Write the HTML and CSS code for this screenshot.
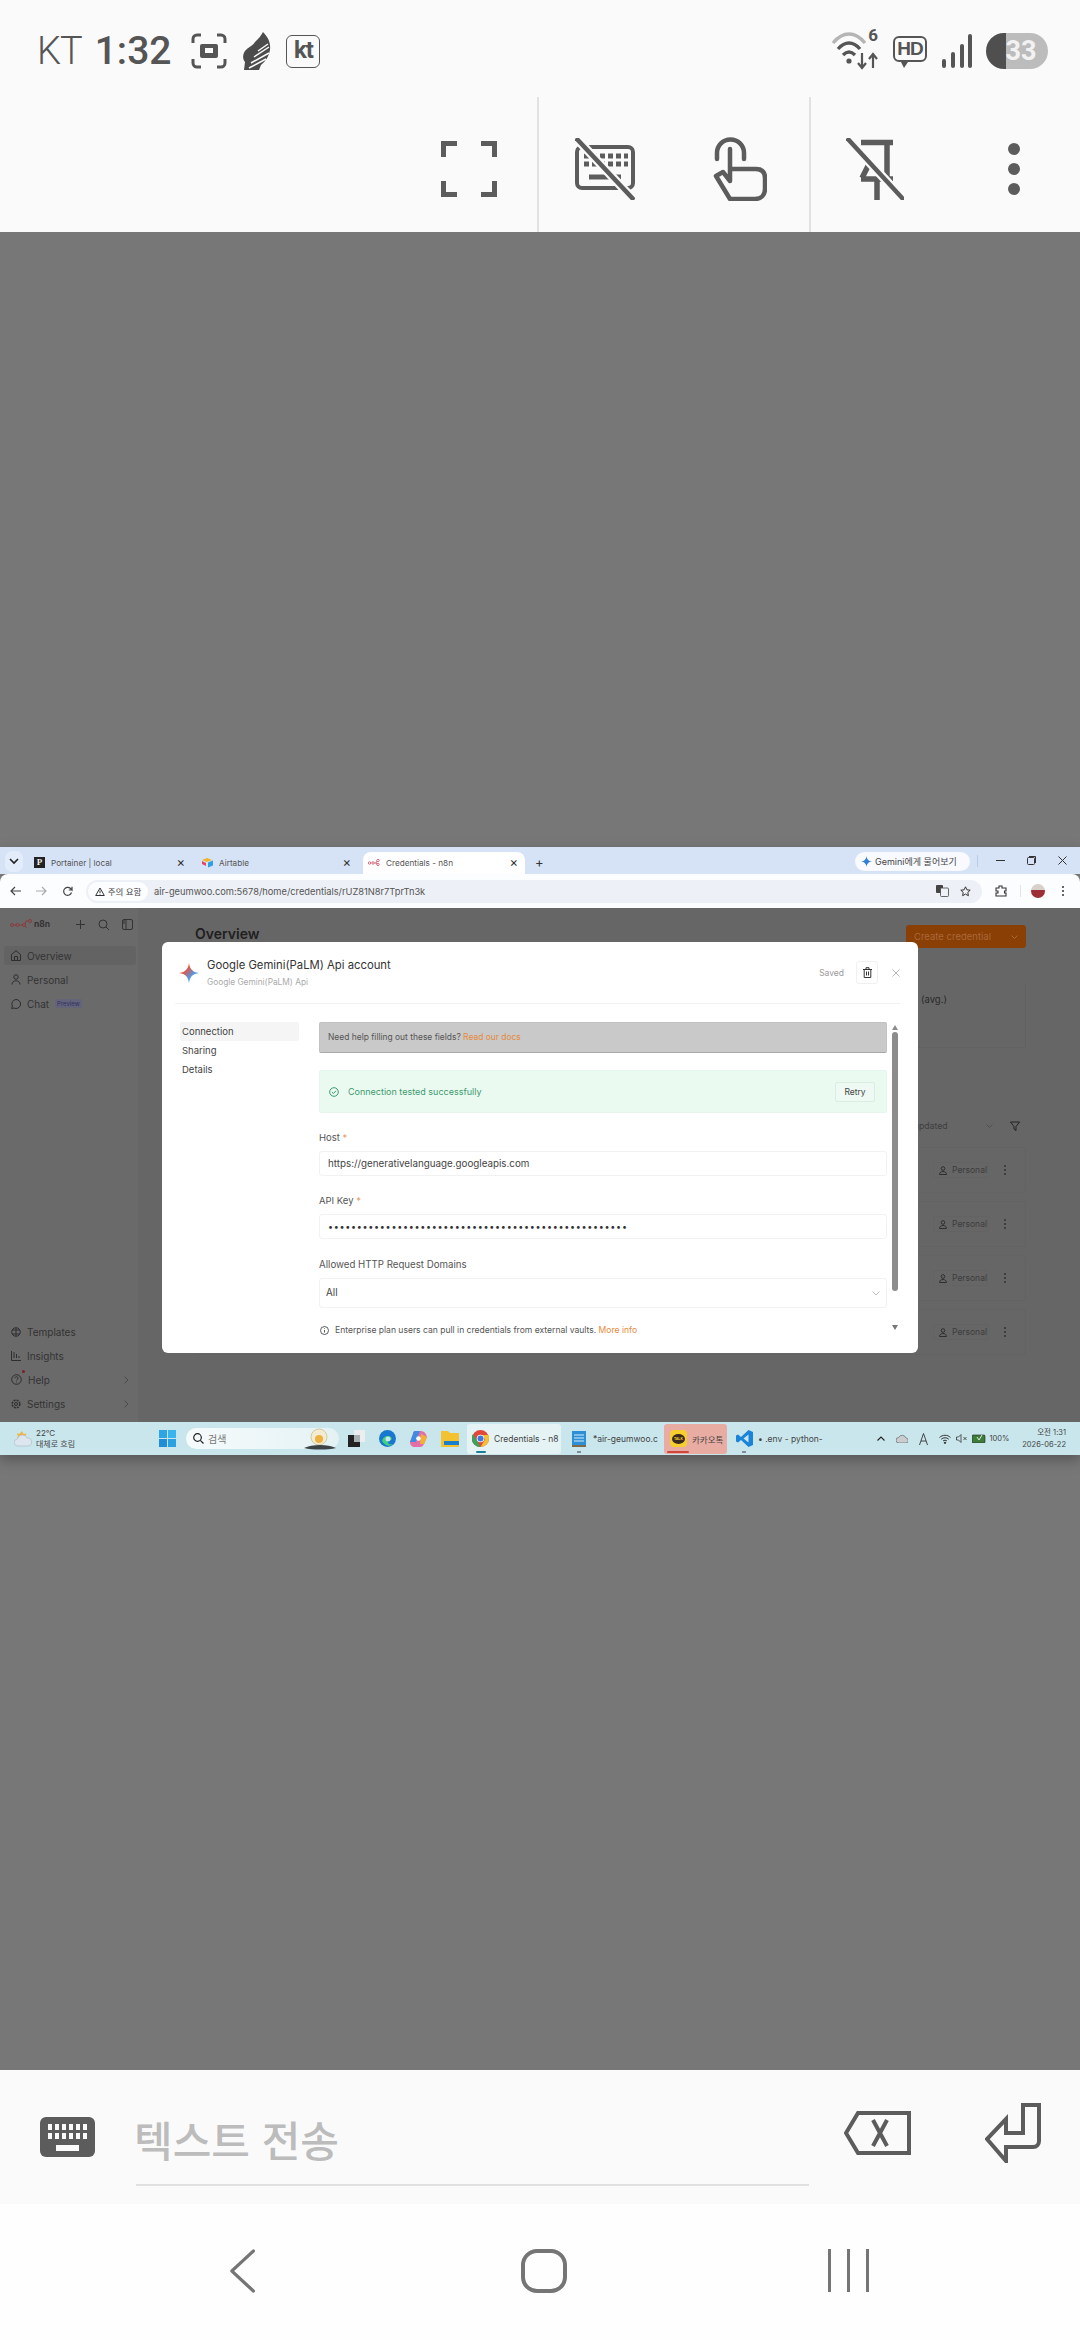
FILE: index.html
```html
<!DOCTYPE html>
<html lang="ko">
<head>
<meta charset="UTF-8" />
<title>Remote session</title>
<link rel="stylesheet" href="styles.css">
</head>
<body>

<svg class="defs" width="0" height="0">
  <defs>
    <linearGradient id="spark" x1="0" y1="0" x2="1" y2="1">
      <stop offset="0" stop-color="#e8b23a"/>
      <stop offset="0.35" stop-color="#e0574a"/>
      <stop offset="0.65" stop-color="#4e9be8"/>
      <stop offset="1" stop-color="#3fae6a"/>
    </linearGradient>
  </defs>
</svg>

<!-- 폰 상단 -->
<div class="top-panel">
  <div class="status-bar">
    <div class="status-left">
      <span class="carrier">KT</span>
      <span class="clock">1:32</span>
      <svg class="st-shot" width="36" height="36" viewBox="0 0 36 36" fill="none" stroke="#555" stroke-width="3">
        <path d="M2 10V6a4 4 0 0 1 4-4h4M26 2h4a4 4 0 0 1 4 4v4M34 26v4a4 4 0 0 1-4 4h-4M10 34H6a4 4 0 0 1-4-4v-4"/>
        <rect x="9" y="11" width="18" height="14" rx="2" fill="#555" stroke="none"/>
        <rect x="14" y="15" width="8" height="5" fill="#fafafa" stroke="none"/>
      </svg>
      <svg class="st-feather" width="30" height="38" viewBox="0 0 30 38">
        <path d="M22 0c5 5 8 11 7 18-1 6-4 11-9 15l-2 5H3l1-8c-3-4-2-8 0-11 3-4 8-5 10-9 3-3 6-6 8-10z" fill="#4c4c4c"/>
        <path d="M8 36l17-9M10 31l18-10M13 25l15-10M17 19l10-7" stroke="#fafafa" stroke-width="1.500"/>
      </svg>
      <span class="st-kt">kt</span>
    </div>
    <div class="status-right">
      <span class="st-wifi">
        <svg width="50" height="40" viewBox="0 0 50 40" fill="none" stroke-width="3.4">
          <path d="M2 12C12 0 24 0 34 12" stroke="#b5b5b5"/>
          <path d="M7 18c7-8 15-8 22 0M12 24c4-4 8-4 12 0" stroke="#555"/>
          <circle cx="18" cy="30" r="2.6" fill="#555" stroke="none"/>
          <path d="M31 22v14M27 32l4 5 4-5M42 37V23M38 28l4-5 4 5" stroke="#555" stroke-width="2.2"/>
        </svg>
        <span class="st-six">6</span>
      </span>
      <span class="st-hd">HD</span>
      <svg class="st-signal" width="30" height="34" viewBox="0 0 30 34" fill="#555">
        <rect x="0" y="25" width="4" height="9" rx="2"/><rect x="9" y="18" width="4" height="16" rx="2"/>
        <rect x="18" y="10" width="4" height="24" rx="2"/><rect x="26" y="0" width="4" height="34" rx="2"/>
      </svg>
      <span class="st-battery"><span class="st-battery-num">33</span></span>
    </div>
  </div>

  <div class="tool-bar">
    <div class="tool-group tool-a">
      <svg width="56" height="56" viewBox="0 0 56 56" fill="none" stroke="#5c5c5c" stroke-width="5">
        <path d="M2.500 16V2.500H16M40 2.500h13.500V16M53.500 40v13.500H40M16 53.500H2.500V40"/>
      </svg>
    </div>
    <div class="tool-group tool-b">
      <svg width="60" height="62" viewBox="0 0 60 62" fill="none" stroke="#5c5c5c">
        <rect x="2" y="9" width="56" height="41" rx="5" stroke-width="4"/>
        <path d="M9 18h5M17 18h5M25 18h5M33 18h5M41 18h5M49 18h4M9 26h5M17 26h5M25 26h5M33 26h5M41 26h5M49 26h4M14 39h32" stroke-width="5"/>
        <path d="M1 0l58 62" stroke="#fafafa" stroke-width="9"/>
        <path d="M1 0l58 62" stroke-width="4.500"/>
      </svg>
      <svg width="54" height="64" viewBox="0 0 54 64" fill="none" stroke="#5c5c5c" stroke-width="4.500" stroke-linejoin="round" stroke-linecap="round">
        <path d="M4 22V16a13.500 13.500 0 0 1 27 0v6"/>
        <path d="M17 12v32l-7-9-7 4 14 23h25c6 0 10-4 10-10V41c0-6-3-9-9-9H17"/>
      </svg>
    </div>
    <div class="tool-group tool-c">
      <svg width="58" height="62" viewBox="0 0 58 62" fill="none" stroke="#5c5c5c">
        <path d="M15 4.500h32M41 4v36M15 41h32M31 42v20M23 26l-7 14" stroke-width="5.500"/>
        <path d="M1 0l57 62" stroke="#fafafa" stroke-width="9"/>
        <path d="M1 0l57 62" stroke-width="4.500"/>
      </svg>
      <span class="dots-v"><i></i><i></i><i></i></span>
    </div>
  </div>
</div>

<!-- 원격 화면 -->
<div class="remote">
  <div class="tab-strip">
    <span class="tab-menu">
      <svg width="10" height="7" viewBox="0 0 10 7" fill="none" stroke="#222" stroke-width="1.600"><path d="M1 1l4 4 4-4"/></svg>
    </span>
    <div class="tab tab-first">
      <span class="fav-portainer">P</span>
      <span class="tab-title">Portainer | local</span>
      <span class="tab-x">×</span>
    </div>
    <div class="tab tab-second">
      <svg width="11" height="10" viewBox="0 0 11 10">
        <path d="M5 0l5 2-5 2-5-2z" fill="#f0b429"/><path d="M6 4.500l5-2v5l-5 2z" fill="#2d9fe8"/><path d="M0 3l4 2v3L0 6z" fill="#e8455c"/>
      </svg>
      <span class="tab-title">Airtable</span>
      <span class="tab-x">×</span>
    </div>
    <div class="tab tab-active">
      <svg width="12" height="7" viewBox="0 0 12 7" fill="none" stroke="#d76a7c" stroke-width="1">
        <circle cx="1.500" cy="4" r="1.200"/><circle cx="5" cy="4" r="1.200"/><circle cx="10" cy="1.500" r="1.200"/><circle cx="10" cy="5.500" r="1.200"/>
        <path d="M6.200 4H8l1-2M8 4l1 1.500"/>
      </svg>
      <span class="tab-title">Credentials - n8n</span>
      <span class="tab-x">×</span>
    </div>
    <span class="tab-plus">+</span>
    <span class="gemini-pill">
      <svg width="11" height="11" viewBox="0 0 24 24"><path d="M12 0c1 7 4 11 12 12-8 1-11 5-12 12-1-7-4-11-12-12 8-1 11-5 12-12z" fill="#2f7fd6"/></svg>
      Gemini에게 물어보기
    </span>
    <span class="strip-sep"></span>
    <div class="win-controls">
      <svg width="9" height="9" viewBox="0 0 9 9" stroke="#333" fill="none"><path d="M0 4.500h9"/></svg>
      <svg width="9" height="9" viewBox="0 0 9 9" stroke="#333" fill="none"><rect x="0.500" y="1.500" width="7" height="7" rx="1"/><path d="M2 .500h6.500V7"/></svg>
      <svg width="9" height="9" viewBox="0 0 9 9" stroke="#333" fill="none"><path d="M.500.500l8 8M8.500.500l-8 8"/></svg>
    </div>
  </div>

  <div class="url-bar">
    <svg width="11" height="10" viewBox="0 0 11 10" fill="none" stroke="#444" stroke-width="1.200"><path d="M11 5H1M5 1L1 5l4 4"/></svg>
    <svg class="nav-off" width="11" height="10" viewBox="0 0 11 10" fill="none" stroke="#aaa" stroke-width="1.200"><path d="M0 5h10M6 1l4 4-4 4"/></svg>
    <svg width="11" height="11" viewBox="0 0 11 11" fill="none" stroke="#444" stroke-width="1.200"><path d="M9.500 6.500a4 4 0 1 1-1-4L10 4V.800M10 4H6.800"/></svg>
    <div class="omnibox">
      <span class="warn-chip">
        <svg width="10" height="9" viewBox="0 0 10 9" fill="none" stroke="#333"><path d="M5 1l4.300 7.500H.700zM5 3.500v2.500M5 6.800v.7"/></svg>
        주의 요함
      </span>
      <span class="url-text">air-geumwoo.com:5678/home/credentials/rUZ81N8r7TprTn3k</span>
      <span class="omni-icons">
        <svg width="13" height="12" viewBox="0 0 13 12"><rect x="0" y="0" width="7" height="8" rx="1" fill="#444"/><rect x="4.500" y="3" width="8" height="8.500" rx="1" fill="#eef1f7" stroke="#444" stroke-width=".8"/></svg>
        <svg width="11" height="11" viewBox="0 0 11 11" fill="none" stroke="#333" stroke-width="1"><path d="M5.500.800l1.400 3 3.300.400-2.400 2.200.600 3.300-2.900-1.600-2.900 1.600.600-3.300L.800 4.200l3.300-.400z"/></svg>
      </span>
    </div>
    <svg class="ext-icon" width="12" height="12" viewBox="0 0 12 12" fill="none" stroke="#333" stroke-width="1.100"><path d="M1 3h3V1h3v2h4v3H9.500v2H11v3H1V8h2V6H1z"/></svg>
    <span class="url-sep"></span>
    <span class="avatar"></span>
    <span class="dots-small"><i></i><i></i><i></i></span>
  </div>

  <div class="desktop">
    <aside class="side">
      <div class="side-head">
        <svg width="22" height="10" viewBox="0 0 22 10" fill="none" stroke="#8c3b3f" stroke-width="1">
          <circle cx="2" cy="6" r="1.500"/><circle cx="7.500" cy="6" r="1.500"/><circle cx="14" cy="6" r="1.500"/><circle cx="20" cy="2" r="1.500"/>
          <path d="M3.500 6h2.500M9 6h3.500M15 5l1-3h2.500M15 7l2 2"/>
        </svg>
        <span class="side-brand">n8n</span>
        <span class="side-tools">
          <svg width="9" height="9" viewBox="0 0 9 9" stroke="#333"><path d="M4.500 0v9M0 4.500h9"/></svg>
          <svg width="11" height="11" viewBox="0 0 11 11" fill="none" stroke="#333"><circle cx="5" cy="5" r="4"/><path d="M8 8l3 3"/></svg>
          <svg width="11" height="11" viewBox="0 0 11 11" fill="none" stroke="#333"><rect x=".5" y=".5" width="10" height="10" rx="1.500"/><path d="M4 .5v10"/><path d="M1 2h2M1 4h2"/></svg>
        </span>
      </div>
      <nav class="side-list">
        <div class="side-row is-on">
          <svg width="10" height="11" viewBox="0 0 10 11" fill="none" stroke="#2e2e2e"><path d="M.5 4.500L5 .7l4.500 3.800v6h-9zM3.500 10.500V6.500h3v4"/></svg>
          Overview
        </div>
        <div class="side-row">
          <svg width="10" height="11" viewBox="0 0 10 11" fill="none" stroke="#2e2e2e"><circle cx="5" cy="3" r="2.200"/><path d="M1 10.500c0-5 8-5 8 0"/></svg>
          Personal
        </div>
        <div class="side-row">
          <svg width="10" height="10" viewBox="0 0 10 10" fill="none" stroke="#2e2e2e"><path d="M5 .5a4.500 4.500 0 1 1-2 8.500L.7 9.500 1.300 7A4.500 4.500 0 0 1 5 .5z"/></svg>
          Chat <span class="preview">Preview</span>
        </div>
      </nav>
      <nav class="side-list side-bottom">
        <div class="side-row">
          <svg width="10" height="10" viewBox="0 0 10 10" fill="none" stroke="#2e2e2e"><circle cx="5" cy="5" r="4.300"/><path d="M1 3h8M1 7h8M5 1v8"/></svg>
          Templates
        </div>
        <div class="side-row">
          <svg width="10" height="10" viewBox="0 0 10 10" fill="none" stroke="#2e2e2e"><path d="M.5 0v9.500H10M3 7V1M5.500 7V3M8 7V5"/></svg>
          Insights
        </div>
        <div class="side-row has-more">
          <svg width="11" height="11" viewBox="0 0 11 11" fill="none" stroke="#2e2e2e"><circle cx="5.500" cy="5.500" r="4.800"/><path d="M4 4.200c0-2 3-2 3 0 0 1.200-1.500 1.200-1.500 2.300M5.500 7.800v.7"/></svg>
          Help
          <span class="red-dot"></span>
          <svg class="more" width="5" height="8" viewBox="0 0 5 8" fill="none" stroke="#4c4c4c"><path d="M.5.500L4 4 .5 7.500"/></svg>
        </div>
        <div class="side-row has-more">
          <svg width="10" height="10" viewBox="0 0 10 10" fill="none" stroke="#2e2e2e"><circle cx="5" cy="5" r="1.500"/><circle cx="5" cy="5" r="3.800" stroke-width="1.600" stroke-dasharray="2 1"/></svg>
          Settings
          <svg class="more" width="5" height="8" viewBox="0 0 5 8" fill="none" stroke="#4c4c4c"><path d="M.5.500L4 4 .5 7.500"/></svg>
        </div>
      </nav>
    </aside>

    <main class="back-page">
      <div class="back-head">
        <h1 class="back-title">Overview</h1>
        <span class="create-btn">Create credential
          <svg width="7" height="4" viewBox="0 0 7 4" fill="none" stroke="#a9683a"><path d="M.5.500L3.500 3.500 6.500.500"/></svg>
        </span>
      </div>
      <div class="stat-card">(avg.)</div>
      <div class="sort-row">
        <span class="sort-select">Sort by last updated
          <svg width="7" height="4" viewBox="0 0 7 4" fill="none" stroke="#4e4e4e"><path d="M.5.500L3.500 3.500 6.500.500"/></svg>
        </span>
        <svg class="filter" width="10" height="10" viewBox="0 0 10 10" fill="none" stroke="#222"><path d="M.5 1h9L6 5.500v4L4 8V5.500z"/></svg>
      </div>
      <div class="cred-rows">
        <div class="cred-row"><span class="badge"><svg width="8" height="9" viewBox="0 0 8 9" fill="none" stroke="#2e2e2e"><circle cx="4" cy="2.500" r="1.800"/><path d="M.5 8.500c0-4 7-4 7 0z"/></svg>Personal</span><span class="dots-small dark"><i></i><i></i><i></i></span></div>
        <div class="cred-row"><span class="badge"><svg width="8" height="9" viewBox="0 0 8 9" fill="none" stroke="#2e2e2e"><circle cx="4" cy="2.500" r="1.800"/><path d="M.5 8.500c0-4 7-4 7 0z"/></svg>Personal</span><span class="dots-small dark"><i></i><i></i><i></i></span></div>
        <div class="cred-row"><span class="badge"><svg width="8" height="9" viewBox="0 0 8 9" fill="none" stroke="#2e2e2e"><circle cx="4" cy="2.500" r="1.800"/><path d="M.5 8.500c0-4 7-4 7 0z"/></svg>Personal</span><span class="dots-small dark"><i></i><i></i><i></i></span></div>
        <div class="cred-row"><span class="badge"><svg width="8" height="9" viewBox="0 0 8 9" fill="none" stroke="#2e2e2e"><circle cx="4" cy="2.500" r="1.800"/><path d="M.5 8.500c0-4 7-4 7 0z"/></svg>Personal</span><span class="dots-small dark"><i></i><i></i><i></i></span></div>
      </div>
    </main>

    <!-- 모달 -->
    <section class="modal">
      <header class="modal-head">
        <svg class="spark" width="20" height="20" viewBox="0 0 24 24"><path d="M12 0c1 7 4 11 12 12-8 1-11 5-12 12-1-7-4-11-12-12 8-1 11-5 12-12z" fill="url(#spark)"/></svg>
        <div class="modal-titles">
          <div class="modal-title">Google Gemini(PaLM) Api account</div>
          <div class="modal-sub">Google Gemini(PaLM) Api</div>
        </div>
        <span class="saved">Saved</span>
        <span class="trash">
          <svg width="9" height="11" viewBox="0 0 9 11" fill="none" stroke="#333" stroke-width="1"><path d="M0 2.500h9M3 2.500V.7h3v1.800M1.200 2.500v8h6.600v-8M3.500 4.500v4M5.500 4.500v4"/></svg>
        </span>
        <svg class="modal-x" width="8" height="8" viewBox="0 0 8 8" stroke="#bbb"><path d="M.5.500l7 7M7.500.500l-7 7"/></svg>
      </header>
      <div class="modal-body">
        <nav class="modal-nav">
          <div class="modal-tab is-on">Connection</div>
          <div class="modal-tab">Sharing</div>
          <div class="modal-tab">Details</div>
        </nav>
        <div class="modal-form">
          <div class="notice">Need help filling out these fields? <span class="notice-link">Read our docs</span></div>
          <div class="success">
            <svg width="10" height="10" viewBox="0 0 10 10" fill="none" stroke="#3b9a6d"><circle cx="5" cy="5" r="4.300"/><path d="M3 5.200l1.500 1.300L7 3.800"/></svg>
            <span class="success-text">Connection tested successfully</span>
            <span class="retry">Retry</span>
          </div>
          <label class="field-label">Host <span class="req">*</span></label>
          <div class="field field-host">https://generativelanguage.googleapis.com</div>
          <label class="field-label">API Key <span class="req">*</span></label>
          <div class="field field-key">••••••••••••••••••••••••••••••••••••••••••••••••••••</div>
          <label class="field-label label-allowed">Allowed HTTP Request Domains</label>
          <div class="field field-select">All
            <svg width="8" height="5" viewBox="0 0 8 5" fill="none" stroke="#bbb"><path d="M.5.500L4 4 7.500.500"/></svg>
          </div>
          <div class="info">
            <svg width="9" height="9" viewBox="0 0 9 9" fill="none" stroke="#333" stroke-width=".8"><circle cx="4.500" cy="4.500" r="4"/><path d="M4.500 4v2.500M4.500 2.300v.7"/></svg>
            <span>Enterprise plan users can pull in credentials from external vaults. <span class="more-info">More info</span></span>
          </div>
        </div>
        <div class="modal-scroll">
          <i class="arrow-up"></i>
          <span class="thumb"></span>
          <i class="arrow-down"></i>
        </div>
      </div>
    </section>
  </div>

  <div class="taskbar">
    <div class="weather">
      <svg width="18" height="18" viewBox="0 0 18 18">
        <path d="M8 1l1.500 3 3-.5-1 3 2 2H3l1-3-1.500-2 3 .2z" fill="#eeb64a"/>
        <path d="M4 16a3.500 3.500 0 0 1-.5-7A5 5 0 0 1 13 8a4 4 0 0 1 1 8z" fill="#dde6ee" stroke="#a9b8c6" stroke-width=".6"/>
      </svg>
      <div class="weather-text"><div>22°C</div><div>대체로 흐림</div></div>
    </div>
    <svg class="win-logo" width="17" height="17" viewBox="0 0 17 17">
      <rect width="8" height="8" fill="#2fa6e4"/><rect x="9" width="8" height="8" fill="#39b4ee"/><rect y="9" width="8" height="8" fill="#1f8ed6"/><rect x="9" y="9" width="8" height="8" fill="#2a9fe2"/>
    </svg>
    <div class="task-search">
      <svg width="11" height="11" viewBox="0 0 11 11" fill="none" stroke="#222" stroke-width="1.200"><circle cx="4.500" cy="4.500" r="3.800"/><path d="M7.300 7.300L10.500 10.500"/></svg>
      <span class="task-search-text">검색</span>
      <svg class="sunrise" width="32" height="22" viewBox="0 0 32 22">
        <circle cx="15" cy="9" r="8" fill="#f3ecd0" stroke="#d3c9a2"/><circle cx="15" cy="11" r="4" fill="#eeb040"/>
        <path d="M0 20c8-4 24-4 32 0-8 2-24 2-32 0z" fill="#3d4246"/>
      </svg>
    </div>
    <div class="task-icons">
      <svg width="17" height="17" viewBox="0 0 17 17"><rect x="6" width="11" height="12" fill="#ecedee"/><rect y="5" width="12" height="12" fill="#222"/><rect x="6" y="5" width="6" height="7" fill="#a9b0b4"/></svg>
      <svg width="17" height="17" viewBox="0 0 17 17"><circle cx="8.500" cy="8.500" r="8.500" fill="#1877cf"/><path d="M3 11c1-5 6-6 9-4 1 1 1 3-1 3-3 0-3 2-1 4 1 .7 3 .5 4 0-3 3-8 2-11-3z" fill="#43d27e"/><circle cx="9" cy="9" r="2.500" fill="#c9e6ec"/></svg>
      <svg width="17" height="17" viewBox="0 0 17 17"><path d="M5 1h6c3 0 5 2 6 6l-3 7c-1 2-2 3-4 3H5c-3 0-5-2-5-5l3-8c0-2 1-3 2-3z" fill="#e46ea6"/><path d="M5 1h5L6 12H0L3 4c0-2 1-3 2-3z" fill="#3f8be0"/><path d="M11 4l6 3-3 7-4 0z" fill="#f2b134"/><circle cx="8.500" cy="8.500" r="2.300" fill="#fff"/></svg>
      <svg width="18" height="17" viewBox="0 0 18 17"><path d="M0 1h7l2 2h9v14H0z" fill="#f2c230"/><rect x="3" y="11" width="15" height="4" fill="#1d7fc9"/></svg>
    </div>
    <div class="task-app app-chrome">
      <svg width="17" height="17" viewBox="0 0 17 17"><circle cx="8.500" cy="8.500" r="8.500" fill="#e0483c"/><path d="M8.500 17A8.500 8.500 0 0 1 1 4l4.500 7.500 3 5.500z" fill="#3fa05a"/><path d="M17 8.500A8.500 8.500 0 0 1 8.500 17L13 9.500 11 5h5.500c.3 1 .5 2.300.5 3.500z" fill="#f3c230"/><circle cx="8.500" cy="8.500" r="3.800" fill="#fff"/><circle cx="8.500" cy="8.500" r="3" fill="#3b78e0"/></svg>
      <span class="task-label">Credentials - n8</span>
      <span class="task-line line-teal"></span>
    </div>
    <div class="task-app app-note">
      <svg width="14" height="18" viewBox="0 0 14 18"><rect y="1" width="14" height="14" fill="#2f8fd6"/><path d="M2 5h10M2 8h10M2 11h10" stroke="#d9edf8"/><rect y="15" width="14" height="2" fill="#7d6a4a"/></svg>
      <span class="task-label">*air-geumwoo.c</span>
      <span class="task-dot"></span>
    </div>
    <div class="task-app app-kakao">
      <span class="kakao-icon"><span class="kakao-bubble">TALK</span></span>
      <span class="task-label">카카오톡</span>
      <span class="task-line line-red"></span>
    </div>
    <div class="task-app app-code">
      <svg width="17" height="17" viewBox="0 0 17 17"><path d="M12.500 0L17 2v13l-4.500 2L5 10 2 12.500 0 11.500v-6L2 4.500 5 7z" fill="#1a84d8"/><path d="M12.500 4.500L7.500 8.500l5 4z" fill="#c9e6ec"/></svg>
      <span class="task-label">• .env - python-</span>
      <span class="task-dot"></span>
    </div>
    <div class="tray">
      <svg width="8" height="5" viewBox="0 0 8 5" fill="none" stroke="#222" stroke-width="1.100"><path d="M.5 4.500L4 1l3.500 3.500"/></svg>
      <svg width="12" height="9" viewBox="0 0 12 9"><path d="M3 9a2.800 2.800 0 0 1-.3-5.600A4 4 0 0 1 10 4a2.500 2.500 0 0 1-.5 5z" fill="#c9cdd0" stroke="#555" stroke-width=".6"/></svg>
      <svg width="9" height="12" viewBox="0 0 9 12" fill="none" stroke="#333" stroke-width=".9"><path d="M.5 12L4.500 .5 8.500 12M2 8h5"/></svg>
      <svg width="12" height="10" viewBox="0 0 12 10" fill="none" stroke="#222" stroke-width=".9"><path d="M.5 3.500c3-3 8-3 11 0M2.200 5.300c2-2 5.600-2 7.600 0M4 7c1-1 3-1 4 0"/><circle cx="6" cy="8.800" r=".7" fill="#222"/></svg>
      <svg class="tray-mute" width="11" height="9" viewBox="0 0 11 9" fill="none" stroke="#333" stroke-width=".8"><path d="M.5 3v3h2L5 8.500V.5L2.500 3zM7.500 3l3 3M10.500 3l-3 3"/></svg>
      <span class="tray-battery">
        <svg width="14" height="9" viewBox="0 0 14 9"><rect x="0" y="1" width="13" height="8" rx="1" fill="#3e7c3c" stroke="#222" stroke-width=".6"/><path d="M5 3l2 3 3-5" stroke="#d8efd6" fill="none"/></svg>
        100%
      </span>
      <div class="tray-clock"><div>오전 1:31</div><div>2026-06-22</div></div>
    </div>
  </div>
</div>

<div class="spacer"></div>

<!-- 입력 막대 -->
<div class="input-bar">
  <svg width="55" height="40" viewBox="0 0 55 40">
    <rect width="55" height="40" rx="6" fill="#5c5c5c"/>
    <path d="M8 10h4M15 10h4M22 10h4M29 10h4M36 10h4M43 10h4M8 19h4M15 19h4M22 19h4M29 19h4M36 19h4M43 19h4" stroke="#fafafa" stroke-width="6"/>
    <rect x="16" y="28" width="23" height="6" fill="#fafafa"/>
  </svg>
  <div class="text-field">텍스트 전송</div>
  <svg class="bksp" width="67" height="44" viewBox="0 0 67 44" fill="none" stroke="#5c5c5c" stroke-width="4">
    <path d="M65 2H14L2 22l12 20h51z"/>
    <path d="M29 9l14 26M43 9L29 35" stroke-width="4"/>
  </svg>
  <svg class="enter" width="56" height="60" viewBox="0 0 56 60" fill="none" stroke="#5c5c5c" stroke-width="4">
    <path d="M54 2H38v28H21V16L2 36l19 22V44h27c4 0 6-3 6-6z"/>
  </svg>
</div>

<!-- 내비게이션 -->
<div class="nav-bar">
  <svg width="28" height="44" viewBox="0 0 28 44" fill="none" stroke="#757575" stroke-width="3.500" stroke-linecap="round" stroke-linejoin="round"><path d="M26 2L2 22l24 20" transform="matrix(.9 0 0 1 1 0)"/></svg>
  <svg width="46" height="44" viewBox="0 0 46 44" fill="none" stroke="#757575" stroke-width="4"><rect x="2" y="2" width="42" height="40" rx="14"/></svg>
  <span class="recents"><i></i><i></i><i></i></span>
</div>

</body>
</html>
```

FILE: styles.css
```css
* { box-sizing: border-box; }

html, body {
  margin: 0;
  padding: 0;
}
body {
  width: 1080px;
  height: 2340px;
  overflow: hidden;
  background: #777;
  font-family: Inter, "Noto Sans CJK KR", sans-serif;
  display: flex;
  flex-direction: column;
}
svg { display: block; flex-shrink: 0; }
.defs { position: absolute; }

/* 폰 상단 */
.top-panel {
  height: 232px;
  background: #fafafa;
  flex-shrink: 0;
}
.status-bar {
  height: 97px;
  padding: 5px 32px 0 37px;
  display: flex;
  justify-content: space-between;
  align-items: center;
  color: #555;
}
.status-left, .status-right {
  display: flex;
  align-items: center;
}
.carrier {
  font: 300 38px Roboto, sans-serif;
  letter-spacing: -1px;
}
.clock {
  font: 500 39px Roboto, sans-serif;
  margin-left: 13px;
}
.st-shot { margin-left: 20px; }
.st-feather { margin-left: 14px; }
.st-kt {
  margin-left: 15px;
  width: 34px;
  height: 33px;
  border: 1.500px solid #555;
  border-radius: 6px;
  font: 700 24px/28px Roboto, sans-serif;
  text-align: center;
  letter-spacing: -1px;
}
.status-right { gap: 12px; }
.st-wifi { position: relative; width: 50px; height: 40px; }
.st-six {
  position: absolute;
  right: 3px;
  top: -6px;
  font: 700 17px Roboto, sans-serif;
}
.st-hd {
  position: relative;
  width: 34px;
  height: 26px;
  border: 2.500px solid #555;
  border-radius: 6px;
  font: 700 19px/21px "Liberation Sans", sans-serif;
  text-align: center;
  letter-spacing: -1px;
  margin-bottom: 4px;
}
.st-hd::after {
  content: "";
  position: absolute;
  left: 6px;
  bottom: -8px;
  border-left: 3px solid transparent;
  border-right: 4px solid transparent;
  border-top: 6px solid #555;
}
.st-signal { margin-left: 3px; }
.st-battery {
  margin-left: 2px;
  width: 62px;
  height: 36px;
  border-radius: 18px;
  background: linear-gradient(90deg, #4f4f4f 0 32%, #bcbcbc 32%);
  text-align: center;
}
.st-battery-num {
  font: 700 27px/36px Roboto, sans-serif;
  color: #f2f2f2;
  padding-left: 8px;
}

.tool-bar {
  height: 135px;
  display: flex;
}
.tool-group {
  display: flex;
  align-items: center;
  height: 100%;
  padding-top: 8px;
}
.tool-a {
  width: 537px;
  justify-content: flex-end;
  padding-right: 40px;
}
.tool-b {
  width: 272px;
  border-left: 2px solid #e2e2e2;
  padding-left: 36px;
  gap: 78px;
}
.tool-c {
  flex: 1;
  border-left: 2px solid #e2e2e2;
  padding-left: 35px;
  gap: 104px;
}
.dots-v {
  display: flex;
  flex-direction: column;
  gap: 8px;
}
.dots-v i {
  width: 12px;
  height: 12px;
  border-radius: 50%;
  background: #5c5c5c;
}

/* 원격 화면 */
.remote {
  margin-top: 615px;
  height: 608px;
  flex-shrink: 0;
  display: flex;
  flex-direction: column;
  box-shadow: 0 5px 12px rgba(0,0,0,0.28);
}
.tab-strip {
  height: 27px;
  background: #d6e2f6;
  display: flex;
  align-items: flex-end;
  color: #555;
  font-size: 8.200px;
}
.tab-menu {
  width: 18px;
  height: 21px;
  margin: 0 0 2px 5px;
  border-radius: 7px;
  background: #e3ecfa;
  display: flex;
  align-items: center;
  justify-content: center;
}
.tab {
  height: 22px;
  display: flex;
  align-items: center;
  gap: 6px;
  padding-bottom: 1px;
}
.tab-title { flex: 1; white-space: nowrap; }
.tab-x { font-size: 13px; color: #333; line-height: 1; }
.tab-first { width: 170px; padding: 0 8px 1px 11px; margin-bottom: 0; }
.tab-second { width: 168px; padding: 0 10px 1px 8px; border-left: 1px solid transparent; }
.tab-active {
  width: 162px;
  margin-left: 2px;
  padding: 0 7px 1px 5px;
  background: #fff;
  border-radius: 8px 8px 0 0;
}
.fav-portainer {
  width: 11px;
  height: 11px;
  background: #222;
  color: #eee;
  font: 700 9px/11px "Liberation Serif", serif;
  text-align: center;
}
.tab-plus {
  margin: 0 0 3px 10px;
  font-size: 13px;
  line-height: 18px;
  color: #333;
}
.gemini-pill {
  margin: 0 0 3px auto;
  height: 19px;
  width: 115px;
  border-radius: 10px;
  background: #f8faff;
  display: flex;
  align-items: center;
  gap: 3px;
  padding-left: 6px;
  font-size: 9px;
  color: #444;
  white-space: nowrap;
}
.strip-sep {
  width: 1px;
  height: 12px;
  margin: 0 0 7px 7px;
  background: #b8cce8;
}
.win-controls {
  display: flex;
  gap: 22px;
  margin: 0 13px 9px 18px;
}

.url-bar {
  height: 34px;
  background: #fcfdff;
  border-radius: 8px 8px 0 0;
  display: flex;
  align-items: center;
  padding-left: 10px;
  gap: 15px;
  color: #555;
}
.omnibox {
  width: 896px;
  height: 23px;
  margin-left: -2px;
  border-radius: 12px;
  background: #edf0f6;
  display: flex;
  align-items: center;
  padding-left: 2px;
}
.warn-chip {
  width: 60px;
  height: 19px;
  border-radius: 10px;
  background: #fcfdff;
  display: flex;
  align-items: center;
  justify-content: center;
  gap: 3px;
  font-size: 8.500px;
  color: #444;
  white-space: nowrap;
}
.url-text {
  margin-left: 6px;
  font-size: 9.300px;
  color: #555;
  white-space: nowrap;
}
.omni-icons {
  margin-left: auto;
  display: flex;
  gap: 11px;
  align-items: center;
  padding-right: 11px;
}
.ext-icon { margin-left: -2px; }
.url-sep {
  width: 1px;
  height: 12px;
  background: #dfe3ea;
  margin: 0 -5px 0 -2px;
}
.avatar {
  width: 14px;
  height: 14px;
  border-radius: 50%;
  background: linear-gradient(180deg, #d9cfcb 0 40%, #9c2f35 40%);
}
.dots-small {
  display: flex;
  flex-direction: column;
  gap: 2px;
  margin-left: 2px;
}
.dots-small i {
  width: 2px;
  height: 2px;
  border-radius: 50%;
  background: #333;
}

.desktop {
  height: 514px;
  position: relative;
  display: flex;
  background: #666;
  color: #2e2e2e;
}

/* 사이드바 */
.side {
  width: 138px;
  background: #6a6a6a;
  display: flex;
  flex-direction: column;
  padding: 10px 0 0;
  font-size: 10px;
}
.side-head {
  display: flex;
  align-items: center;
  height: 12px;
  padding-left: 10px;
  margin-top: 0;
}
.side-brand {
  margin-left: 2px;
  font-weight: 700;
  font-size: 8.500px;
  color: #333;
}
.side-tools {
  display: flex;
  align-items: center;
  gap: 13px;
  margin-left: 26px;
}
.side-list {
  margin-top: 16px;
  display: flex;
  flex-direction: column;
  gap: 5px;
}
.side-row {
  height: 19px;
  margin: 0 2px 0 4px;
  padding-left: 7px;
  display: flex;
  align-items: center;
  gap: 6px;
  color: #333;
  position: relative;
}
.side-row.is-on { background: #636363; border-radius: 3px; }
.preview {
  font-size: 6px;
  color: #2f2f66;
  background: #63637a;
  padding: 1px 2px;
  border-radius: 2px;
}
.side-bottom { margin-top: auto; padding-bottom: 9px; }
.more { margin-left: auto; margin-right: 7px; }
.red-dot {
  position: absolute;
  left: 18px;
  top: 0;
  width: 3px;
  height: 3px;
  border-radius: 50%;
  background: #7c1e24;
}

/* 뒤쪽 페이지 */
.back-page {
  flex: 1;
  padding: 17px 54px 0 57px;
  display: flex;
  flex-direction: column;
}
.back-head {
  display: flex;
  justify-content: space-between;
  height: 23px;
}
.back-title {
  margin: 0;
  font-size: 14px;
  font-weight: 600;
  line-height: 18px;
  color: #1f1f1f;
}
.create-btn {
  width: 120px;
  height: 23px;
  border-radius: 3px;
  background: #8a3f05;
  color: #a9683a;
  font-size: 9.500px;
  display: flex;
  align-items: center;
  justify-content: space-between;
  padding: 0 8px;
}
.stat-card {
  width: 116px;
  height: 65px;
  margin: 35px 0 0 auto;
  padding: 11px 0 0 11px;
  border-right: 1px solid #616161;
  border-bottom: 1px solid #616161;
  font-size: 9.500px;
  color: #2a2a2a;
}
.sort-row {
  display: flex;
  justify-content: flex-end;
  align-items: center;
  height: 28px;
  margin-top: 64px;
  font-size: 8.700px;
  color: #3e3e3e;
}
.sort-select {
  width: 146px;
  display: flex;
  justify-content: space-between;
  align-items: center;
  padding: 0 9px 0 9px;
}
.filter { margin: 0 6px 0 8px; }
.cred-rows {
  margin-top: 7px;
  display: flex;
  flex-direction: column;
  gap: 8px;
}
.cred-row {
  height: 46px;
  border: 1px solid #636363;
  border-radius: 3px;
  display: flex;
  justify-content: flex-end;
  align-items: center;
  padding-right: 19px;
  gap: 16px;
}
.badge {
  width: 55px;
  height: 16px;
  border: 1px solid #636363;
  border-radius: 2px;
  display: flex;
  align-items: center;
  gap: 5px;
  padding-left: 5px;
  font-size: 8.500px;
  color: #3c3c3c;
}
.dots-small.dark { margin: 0; }

/* 모달 */
.modal {
  position: absolute;
  left: 162px;
  top: 34px;
  width: 756px;
  height: 411px;
  background: #fff;
  border-radius: 6px;
  color: #444;
  display: flex;
  flex-direction: column;
}
.modal-head {
  height: 62px;
  margin: 0 18px 0 13px;
  border-bottom: 1px solid #f2f2f2;
  display: flex;
  align-items: center;
  padding: 0 0 0 4px;
}
.modal-titles { margin-left: 8px; }
.modal-title {
  font-size: 11.300px;
  color: #333;
  line-height: 17px;
}
.modal-sub {
  font-size: 8.300px;
  color: #aaa;
  line-height: 13px;
  margin-top: 2px;
}
.saved {
  margin-left: auto;
  font-size: 8.500px;
  color: #9a9a9a;
}
.trash {
  width: 22px;
  height: 23px;
  margin-left: 12px;
  border: 1px solid #f0f0f0;
  border-radius: 3px;
  display: flex;
  align-items: center;
  justify-content: center;
}
.modal-x { margin: 0 0 0 14px; }

.modal-body {
  flex: 1;
  display: flex;
  padding: 18px 0 0 18px;
}
.modal-nav {
  width: 119px;
  flex-shrink: 0;
  font-size: 9.500px;
}
.modal-tab {
  height: 19px;
  line-height: 19px;
  padding-left: 2px;
  color: #444;
}
.modal-tab.is-on { background: #f5f5f5; border-radius: 2px; margin-bottom: 0; }
.modal-tab + .modal-tab { margin-top: 0; }
.modal-form {
  width: 568px;
  margin-left: 20px;
  flex-shrink: 0;
}
.notice {
  height: 31px;
  background: #c9c9c9;
  border: 1px solid #c2c2c2;
  border-bottom-color: #a9a9a9;
  border-radius: 2px;
  padding-left: 8px;
  font-size: 8.450px;
  line-height: 29px;
  color: #555;
}
.notice-link { color: #e58a3c; }
.success {
  height: 43px;
  margin-top: 17px;
  background: #ebfaf1;
  border: 1px solid #e6f6ed;
  border-radius: 2px;
  display: flex;
  align-items: center;
  padding: 0 11px 0 9px;
  font-size: 9px;
  color: #3b9a6d;
}
.success-text { margin-left: 9px; }
.retry {
  margin-left: auto;
  width: 40px;
  height: 20px;
  border: 1px solid #dbeee3;
  border-radius: 2px;
  background: #edf9f2;
  font-size: 8.500px;
  line-height: 18px;
  text-align: center;
  color: #444;
}
.field-label {
  display: block;
  height: 14px;
  margin: 18px 0 6px;
  font-size: 9.500px;
  line-height: 14px;
  color: #555;
}
.label-allowed { font-size: 9.700px; padding-top: 1px; }
.req { color: #e0a070; }
.field {
  height: 25px;
  border: 1px solid #f2f2f2;
  border-radius: 3px;
  padding-left: 8px;
  font-size: 9.800px;
  line-height: 23px;
  color: #444;
}
.field-key {
  letter-spacing: 0.7px;
  color: #333;
  font-size: 9px;
}
.field-select {
  height: 30px;
  padding-left: 6px;
  margin-top: 7px;
  line-height: 28px;
  display: flex;
  align-items: center;
  justify-content: space-between;
  padding-right: 6px;
}
.info {
  margin-top: 15px;
  height: 14px;
  display: flex;
  align-items: center;
  gap: 6px;
  padding-left: 1px;
  font-size: 8.550px;
  color: #555;
  white-space: nowrap;
}
.more-info { color: #e58a3c; }
.modal-scroll {
  width: 6px;
  margin-left: 5px;
  display: flex;
  flex-direction: column;
  align-items: center;
  padding-top: 3px;
}
.arrow-up, .arrow-down {
  width: 0;
  height: 0;
  border-left: 3px solid transparent;
  border-right: 3px solid transparent;
}
.arrow-up { border-bottom: 5px solid #8c8c8c; }
.arrow-down { border-top: 5px solid #777; margin-top: 34px; }
.thumb {
  width: 6px;
  height: 259px;
  margin-top: 2px;
  border-radius: 3px;
  background: #8c8c8c;
}

/* 작업 표시줄 */
.taskbar {
  height: 33px;
  background: #c9e6ec;
  display: flex;
  align-items: center;
  font-size: 8.500px;
  color: #444;
  position: relative;
}
.weather {
  width: 159px;
  padding-left: 14px;
  display: flex;
  align-items: center;
  gap: 4px;
  line-height: 11px;
  font-size: 8px;
}
.task-search {
  width: 153px;
  height: 21px;
  margin-left: 10px;
  border-radius: 11px;
  background: linear-gradient(90deg, #f6fbfc, #e4f2f4);
  display: flex;
  align-items: center;
  padding: 0 3px 0 7px;
}
.task-search-text { margin-left: 4px; font-size: 10px; color: #777; }
.sunrise { margin-left: auto; }
.task-icons {
  display: flex;
  gap: 14px;
  margin-left: 9px;
}
.task-app {
  position: relative;
  height: 30px;
  display: flex;
  align-items: center;
  white-space: nowrap;
}
.task-label { margin-left: 5px; }
.app-chrome {
  width: 94px;
  margin-left: 8px;
  padding-left: 5px;
  background: #e6f3f5;
  border-radius: 3px;
}
.app-note { width: 90px; margin-left: 11px; }
.app-note .task-label { margin-left: 7px; }
.app-kakao {
  width: 63px;
  margin-left: 2px;
  padding-left: 6px;
  background: #e9aca3;
  border-radius: 3px;
}
.app-code { width: 90px; margin-left: 9px; }
.kakao-icon {
  width: 17px;
  height: 17px;
  border-radius: 4px;
  background: #f6cf2e;
  display: flex;
  align-items: center;
  justify-content: center;
  flex-shrink: 0;
}
.kakao-bubble {
  width: 13px;
  height: 10px;
  border-radius: 50%;
  background: #3a2a20;
  color: #f6cf2e;
  font: 700 3.500px/10px "Liberation Sans", sans-serif;
  text-align: center;
}
.task-line {
  position: absolute;
  bottom: 1px;
  height: 2px;
  border-radius: 1px;
}
.line-teal { left: 9px; width: 10px; background: #1d7f99; }
.line-red { left: 3px; width: 22px; background: #d0463c; }
.task-dot {
  position: absolute;
  bottom: 1px;
  width: 4px;
  height: 2px;
  background: #7f8f94;
}
.app-note .task-dot { left: 5px; }
.app-code .task-dot { left: 6px; }
.tray {
  margin-left: auto;
  padding-right: 14px;
  display: flex;
  align-items: center;
  gap: 11px;
}
.tray-mute { margin-left: -6px; }
.tray-battery {
  display: flex;
  align-items: center;
  gap: 3px;
  font-size: 7.500px;
  margin-left: -6px;
}
.tray-clock {
  margin-left: 2px;
  text-align: right;
  line-height: 12px;
  font-size: 7.500px;
}

.spacer { flex: 1; }

/* 입력 막대 */
.input-bar {
  height: 134px;
  background: #fafafa;
  flex-shrink: 0;
  display: flex;
  align-items: center;
  padding-left: 40px;
}
.text-field {
  width: 673px;
  height: 83px;
  margin: 15px 0 0 41px;
  border-bottom: 2px solid #e0e0e0;
  font: 500 42px/72px "Noto Sans CJK KR", sans-serif;
  text-indent: -2px;
  color: #bcbcbc;
}
.bksp { margin: 0 0 8px 35px; }
.enter { margin: 0 0 8px 74px; }

/* 내비게이션 */
.nav-bar {
  height: 136px;
  background: #fefefe;
  flex-shrink: 0;
  display: flex;
  align-items: flex-start;
  padding: 45px 0 0 229px;
}
.nav-bar svg:nth-child(2) { margin-left: 264px; }
.recents {
  margin-left: 261px;
  display: flex;
  gap: 16px;
  height: 43px;
}
.recents i {
  width: 3px;
  background: #757575;
}
```
